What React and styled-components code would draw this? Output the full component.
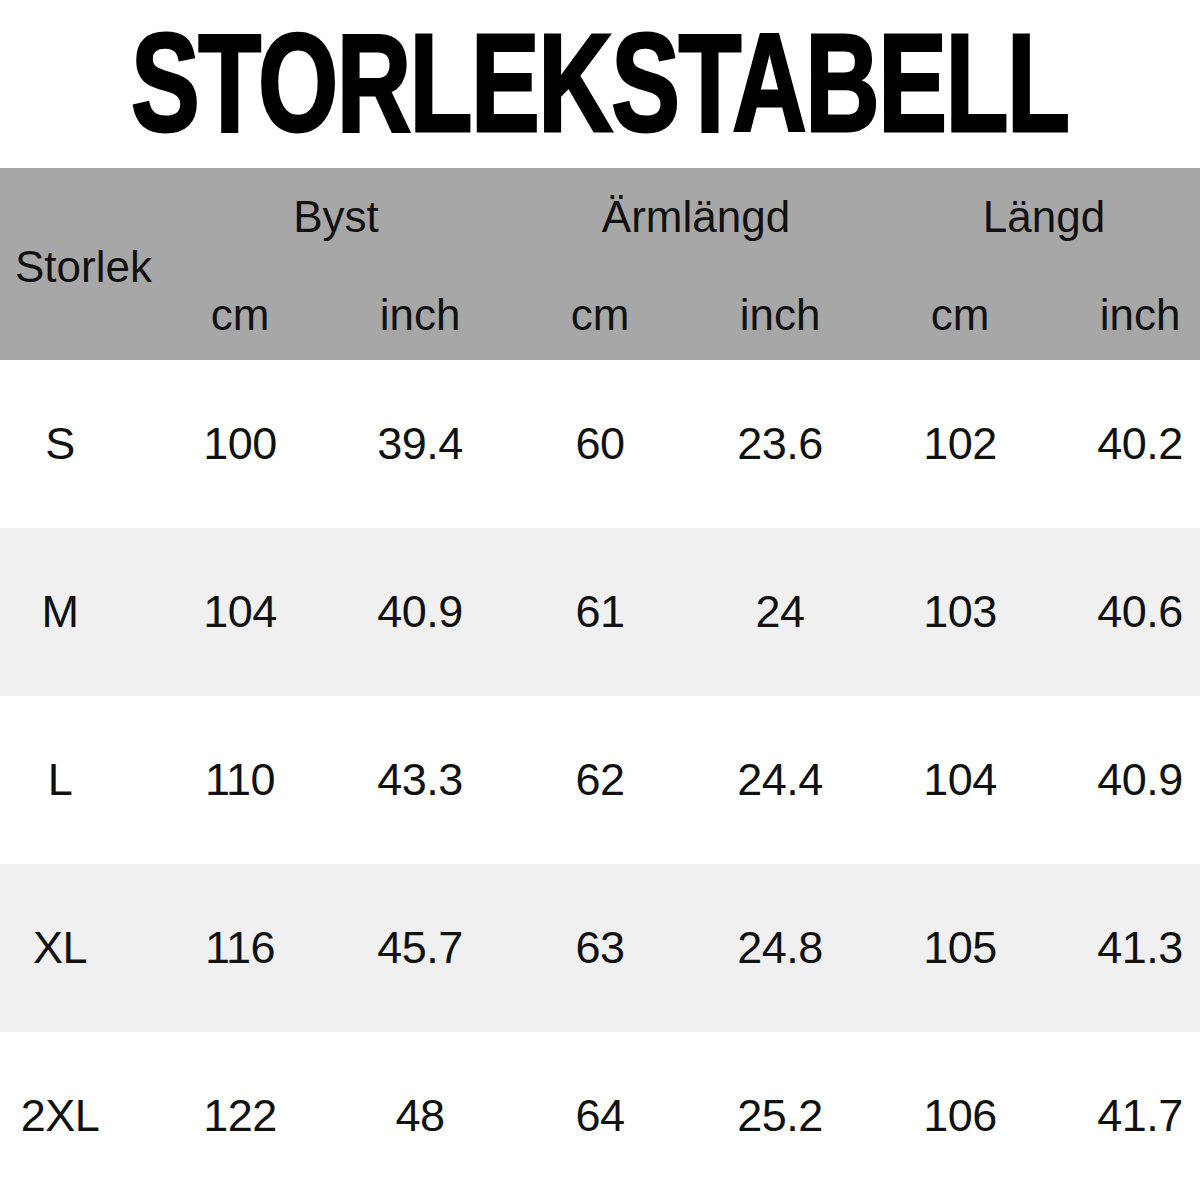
import styled, { createGlobalStyle } from 'styled-components';

const GlobalStyle = createGlobalStyle`
	body {
		margin: 0;
		background: #ffffff;
		font-family: 'Liberation Sans', Arial, sans-serif;
		color: #111111;
	}
`;

// shift nudges each group label a little, as in the original chart
const columns = [
	{ title: 'Byst', key: 'byst', shift: 6 },
	{ title: 'Ärmlängd', key: 'arm', shift: 6 },
	{ title: 'Längd', key: 'langd', shift: -6 },
];

const rows = [
	{ size: 'S', values: ['100', '39.4', '60', '23.6', '102', '40.2'] },
	{ size: 'M', values: ['104', '40.9', '61', '24', '103', '40.6'] },
	{ size: 'L', values: ['110', '43.3', '62', '24.4', '104', '40.9'] },
	{ size: 'XL', values: ['116', '45.7', '63', '24.8', '105', '41.3'] },
	{ size: '2XL', values: ['122', '48', '64', '25.2', '106', '41.7'] },
];

export default function App() {
	return (
		<Page>
			<GlobalStyle />
			<TitleBar>
				<Title>STORLEKSTABELL</Title>
			</TitleBar>
			<Table>
				<Header>
					<StorlekHead>Storlek</StorlekHead>
					{columns.map((c) => (
						<GroupHead key={c.key} $shift={c.shift}>
							{c.title}
						</GroupHead>
					))}
					{columns.map((c) => [
						<UnitHead key={c.key + '-cm'}>cm</UnitHead>,
						<UnitHead key={c.key + '-in'}>inch</UnitHead>,
					])}
				</Header>
				{rows.map((r, i) => (
					<Row key={r.size} $shaded={i % 2 === 1}>
						<SizeCell>{r.size}</SizeCell>
						{r.values.map((v, j) => (
							<Cell key={j}>{v}</Cell>
						))}
					</Row>
				))}
			</Table>
		</Page>
	);
}

const Page = styled.div`
	width: 1200px;
	height: 1200px;
	overflow: hidden;
`;

const TitleBar = styled.div`
	height: 168px;
	display: flex;
	align-items: center;
	justify-content: center;
`;

const Title = styled.h1`
	margin: 0;
	font-family: 'Liberation Sans', Arial, sans-serif;
	font-weight: 700;
	font-size: 140px;
	line-height: 1;
	letter-spacing: -2px;
	color: #000000;
	transform: scaleX(0.736);
	white-space: nowrap;
	position: relative;
	top: -1px;
	-webkit-text-stroke: 3px #000;
`;

const Table = styled.div`
	width: 1230px;
`;

const Header = styled.div`
	height: 192px;
	background: #a7a7a7;
	display: grid;
	grid-template-columns: 150px repeat(6, 180px);
	grid-template-rows: 96px 96px;
	font-size: 44px;
`;

const StorlekHead = styled.div`
	grid-row: 1 / span 2;
	display: flex;
	align-items: center;
	padding-left: 15px;
	padding-top: 6px;
`;

const GroupHead = styled.div`
	grid-column: span 2;
	display: flex;
	align-items: center;
	justify-content: center;
	padding-top: 2px;
	padding-left: ${(p) => Math.max(p.$shift, 0) * 2}px;
	padding-right: ${(p) => Math.max(-p.$shift, 0) * 2}px;
`;

const UnitHead = styled.div`
	display: flex;
	align-items: center;
	justify-content: center;
	padding-top: 6px;
`;

const Row = styled.div`
	height: 168px;
	display: grid;
	grid-template-columns: 150px repeat(6, 180px);
	align-items: center;
	background: ${(p) => (p.$shaded ? '#f0f0f0' : '#ffffff')};
	font-size: 45px;
`;

const Cell = styled.div`
	text-align: center;
	letter-spacing: -0.5px;
`;

const SizeCell = styled(Cell)`
	padding-right: 30px;
`;
